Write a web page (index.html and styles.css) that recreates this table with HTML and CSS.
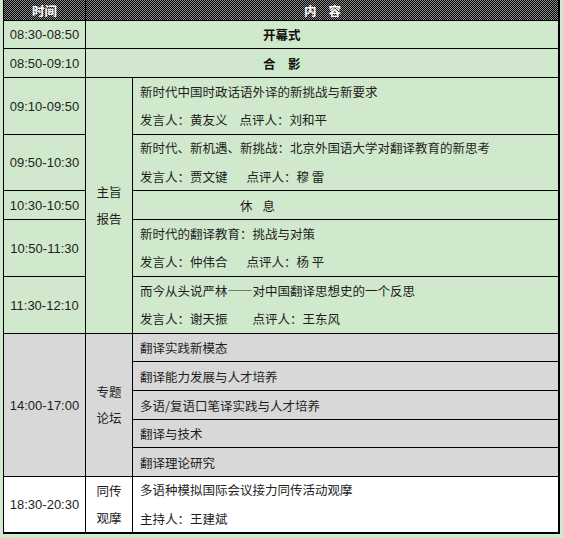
FILE: index.html
```html
<!DOCTYPE html>
<html lang="zh-CN">
<head>
<meta charset="utf-8">
<title>日程</title>
<link rel="stylesheet" href="styles.css">
</head>
<body>
<div class="sched">
  <div class="cell hd">时间</div>
  <div class="cell hd span2 hd-c">内容</div>

  <div class="cell time">08:30-08:50</div>
  <div class="cell span2 bold open">开幕式</div>

  <div class="cell time">08:50-09:10</div>
  <div class="cell span2 bold photo">合影</div>

  <div class="cell time">09:10-09:50</div>
  <div class="cell type rows5"><span>主旨</span><span>报告</span></div>
  <div class="cell content two"><span>新时代中国时政话语外译的新挑战与新要求</span><span>发言人：黄友义<span class="g1">点评人：刘和平</span></span></div>

  <div class="cell time">09:50-10:30</div>
  <div class="cell content two"><span>新时代、新机遇、新挑战：北京外国语大学对翻译教育的新思考</span><span>发言人：贾文键<span class="g2">点评人：穆 雷</span></span></div>

  <div class="cell time">10:30-10:50</div>
  <div class="cell brk">休息</div>

  <div class="cell time">10:50-11:30</div>
  <div class="cell content two"><span>新时代的翻译教育：挑战与对策</span><span>发言人：仲伟合<span class="g2">点评人：杨 平</span></span></div>

  <div class="cell time">11:30-12:10</div>
  <div class="cell content two"><span>而今从头说严林——对中国翻译思想史的一个反思</span><span>发言人：谢天振<span class="g3">点评人：王东风</span></span></div>

  <div class="cell time gray rows5">14:00-17:00</div>
  <div class="cell type gray rows5"><span>专题</span><span>论坛</span></div>
  <div class="cell content gray">翻译实践新模态</div>
  <div class="cell content gray">翻译能力发展与人才培养</div>
  <div class="cell content gray">多语/复语口笔译实践与人才培养</div>
  <div class="cell content gray">翻译与技术</div>
  <div class="cell content gray">翻译理论研究</div>

  <div class="cell time white">18:30-20:30</div>
  <div class="cell type white"><span>同传</span><span>观摩</span></div>
  <div class="cell content two white"><span>多语种模拟国际会议接力同传活动观摩</span><span>主持人：王建斌</span></div>
</div>
</body>
</html>
```
FILE: styles.css
```css
html, body {
  margin: 0;
  padding: 0;
  background: #d3e9cf;
}
body {
  font-family: "Liberation Sans", "Noto Sans CJK SC", sans-serif;
  color: #1e1e1e;
  height: 538px;
  overflow: hidden;
}
.sched {
  margin-left: 3px;
  width: 557px;
  box-sizing: border-box;
  display: grid;
  grid-template-columns: 81px 46px 425px;
  grid-template-rows: 20px 27px 28px 56px 55px 28px 56px 56px 27px 28px 28px 27px 28px 55px;
  gap: 1px;
  padding: 0 2px 2px 1px;
  background: #000;
}
.cell {
  background: #d0e8cb;
  font-size: 12.5px;
  display: flex;
  align-items: center;
  white-space: nowrap;
  overflow: hidden;
}
.hd {
  background: repeating-conic-gradient(#000 0 25%, #8a8a8a 0 50%) 0 0 / 2px 2px;
  color: #fff;
  font-weight: bold;
  justify-content: center;
  font-family: "Noto Sans CJK SC", sans-serif;
}
.hd-c {
  justify-content: flex-start;
  padding-left: 218px;
  letter-spacing: 12px;
}
.span2 { grid-column: span 2; }
.rows5 { grid-row: span 5; }
.time {
  justify-content: center;
  font-size: 13px;
  font-family: "Liberation Sans", sans-serif;
}
.bold {
  font-weight: bold;
  font-family: "Noto Sans CJK SC", sans-serif;
  color: #111;
}
.open { padding-left: 177px; }
.photo { padding-left: 177px; letter-spacing: 12.5px; }
.brk {
  padding-left: 107px;
  letter-spacing: 10px;
  font-family: "Noto Sans CJK SC", sans-serif;
}
.type {
  flex-direction: column;
  justify-content: center;
  align-items: center;
  line-height: 26.5px;
  font-family: "Noto Sans CJK SC", sans-serif;
}
.content {
  padding-left: 7px;
  font-family: "Noto Sans CJK SC", sans-serif;
}
.content.two {
  flex-direction: column;
  align-items: flex-start;
  justify-content: center;
  line-height: 28.5px;
}
.g1 { margin-left: 12px; }
.g2 { margin-left: 19px; }
.g3 { margin-left: 25px; }
.gray { background: #d8d8d8; }
.white { background: #fff; }
```
